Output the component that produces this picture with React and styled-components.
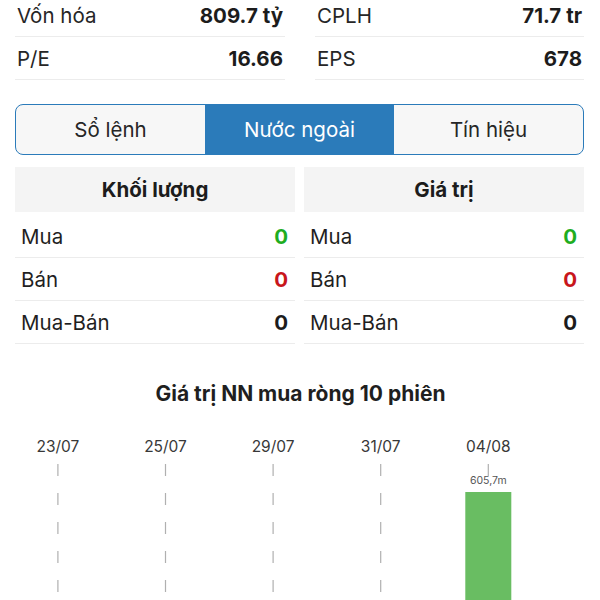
import React from "react";
import styled, { createGlobalStyle } from "styled-components";

const GlobalStyle = createGlobalStyle`
  html, body {
    margin: 0;
    padding: 0;
    background: #ffffff;
  }
  body {
    font-family: "Inter", "Roboto", "Noto Sans", sans-serif;
    color: #1f1f1f;
    overflow: hidden;
  }
`;

const Page = styled.div`
  width: 600px;
  height: 600px;
  overflow: hidden;
  padding: 0 16px 0 15px;
  box-sizing: border-box;
`;

const StatsGrid = styled.div`
  display: grid;
  grid-template-columns: 270px 269px;
  column-gap: 30px;
  margin-top: -6px;
`;

const StatRow = styled.div`
  display: flex;
  justify-content: space-between;
  align-items: center;
  height: 42px;
  border-bottom: 1px solid #ececec;
  padding: 0 2px;
  font-size: 20.5px;
`;

const StatLabel = styled.span`
  color: #262626;
`;

const StatValue = styled.span`
  font-weight: 700;
  color: #1c1c1c;
`;

const Tabs = styled.div`
  display: grid;
  grid-template-columns: repeat(3, 1fr);
  margin-top: 24px;
  height: 51px;
  box-sizing: border-box;
  border: 1.5px solid #2b7bba;
  border-radius: 8px;
  overflow: hidden;
  background: #f7f7f7;
`;

const Tab = styled.div`
  display: flex;
  align-items: center;
  justify-content: center;
  font-size: 20.5px;
  color: ${(p) => (p.$active ? "#ffffff" : "#262626")};
  background: ${(p) => (p.$active ? "#2b7bba" : "transparent")};
`;

const Tables = styled.div`
  display: grid;
  grid-template-columns: 280px 280px;
  column-gap: 9px;
  margin-top: 12px;
`;

const TableHead = styled.div`
  height: 45px;
  margin-bottom: 3px;
  display: flex;
  align-items: center;
  justify-content: center;
  background: #f4f4f4;
  font-size: 20.5px;
  font-weight: 700;
  color: #1c1c1c;
`;

const TableRow = styled.div`
  display: flex;
  justify-content: space-between;
  align-items: center;
  height: 42px;
  border-bottom: 1px solid #ececec;
  padding: 0 7px 0 6px;
  font-size: 20.5px;
`;

const Num = styled.span`
  font-weight: 700;
  color: ${(p) => p.$color || "#1c1c1c"};
`;

const ChartTitle = styled.div`
  margin-top: 38px;
  text-align: center;
  font-size: 21px;
  line-height: 24px;
  font-weight: 700;
  color: #1f1f1f;
  padding-left: 2px;
`;

const ChartBox = styled.div`
  margin: 10px -16px 0 -15px;
  height: 200px;
`;

const stats = [
  [
    { label: "Vốn hóa", value: "809.7 tỷ" },
    { label: "P/E", value: "16.66" },
  ],
  [
    { label: "CPLH", value: "71.7 tr" },
    { label: "EPS", value: "678" },
  ],
];

const tableRows = [
  { label: "Mua", value: "0", color: "#1fad1f" },
  { label: "Bán", value: "0", color: "#c8161b" },
  { label: "Mua-Bán", value: "0" },
];

const sessions = [
  { d: "23/07", v: 0 },
  { d: "24/07", v: 0 },
  { d: "25/07", v: 0 },
  { d: "28/07", v: 0 },
  { d: "29/07", v: 0 },
  { d: "30/07", v: 0 },
  { d: "31/07", v: 0 },
  { d: "01/08", v: 0 },
  { d: "04/08", v: 605.7 },
  { d: "05/08", v: 0 },
];

const NetChart = () => {
  const left = 31;
  const step = 53.8;
  const labelY = 36;
  const dashTop = 48;
  return (
    <svg width="600" height="200" viewBox="0 0 600 200">
      {sessions.map((s, i) => {
        const cx = left + step * (i + 0.5);
        if (i % 2 !== 0) return null;
        return (
          <g key={s.d}>
            <text
              x={cx}
              y={labelY}
              textAnchor="middle"
              fontSize="15.5"
              fill="#383838"
              fontFamily="Inter, Roboto, sans-serif"
            >
              {s.d}
            </text>
            <line
              x1={cx}
              x2={cx}
              y1={dashTop}
              y2={200}
              stroke="#b0b0b0"
              strokeWidth="1.2"
              strokeDasharray="12 17"
            />
          </g>
        );
      })}
      {sessions.map((s, i) => {
        if (!s.v) return null;
        const cx = left + step * (i + 0.5);
        return (
          <g key={"b" + s.d}>
            <rect x={cx - 23} y={76} width={46} height={130} fill="#69bd62" />
            <text
              x={cx}
              y={68}
              textAnchor="middle"
              fontSize="10.5"
              fill="#555"
              fontFamily="Inter, Roboto, sans-serif"
            >
              {s.v.toFixed(1).replace(".", ",")}m
            </text>
          </g>
        );
      })}
    </svg>
  );
};

const App = () => {
  return (
    <Page>
      <GlobalStyle />
      <StatsGrid>
        {stats.map((col, ci) => (
          <div key={ci}>
            {col.map((s) => (
              <StatRow key={s.label}>
                <StatLabel>{s.label}</StatLabel>
                <StatValue>{s.value}</StatValue>
              </StatRow>
            ))}
          </div>
        ))}
      </StatsGrid>

      <Tabs>
        <Tab>Sổ lệnh</Tab>
        <Tab $active>Nước ngoài</Tab>
        <Tab>Tín hiệu</Tab>
      </Tabs>

      <Tables>
        {["Khối lượng", "Giá trị"].map((title) => (
          <div key={title}>
            <TableHead>{title}</TableHead>
            {tableRows.map((r) => (
              <TableRow key={r.label}>
                <span>{r.label}</span>
                <Num $color={r.color}>{r.value}</Num>
              </TableRow>
            ))}
          </div>
        ))}
      </Tables>

      <ChartTitle>Giá trị NN mua ròng 10 phiên</ChartTitle>
      <ChartBox>
        <NetChart />
      </ChartBox>
    </Page>
  );
};

export default App;
